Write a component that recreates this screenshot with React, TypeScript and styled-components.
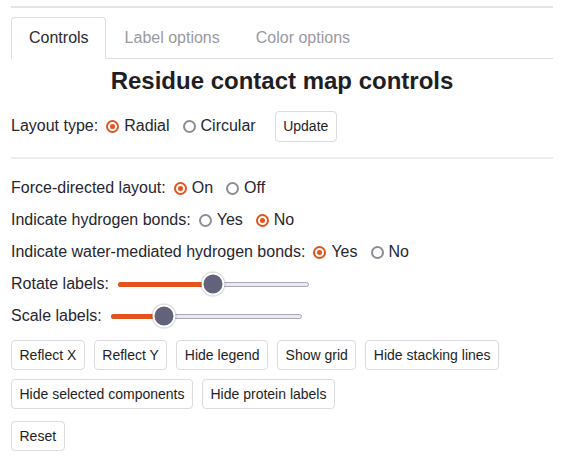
import React, { useState } from "react";
import styled, { createGlobalStyle } from "styled-components";

const Global = createGlobalStyle`
  html, body { margin: 0; padding: 0; background: #fff; }
  body { font-family: "Liberation Sans", Arial, sans-serif; color: #222; }
`;

const ORANGE = "#e2531e";

const Page = styled.div`
  padding: 6px 9px 0 11px;
  width: 542px;
`;

const TopRule = styled.div`
  border-top: 2px solid #e3e3e8;
`;

const Tabs = styled.div`
  display: flex;
  margin-top: 9px;
  border-bottom: 1px solid #dedee2;
  height: 41px;
`;

const Tab = styled.div<{ $active?: boolean }>`
  padding: 0 16px 0 17px;
  margin-right: 1px;
  height: ${(p) => (p.$active ? "42px" : "41px")};
  line-height: 40px;
  font-size: 16px;
  color: ${(p) => (p.$active ? "#2a2a33" : "#9a9aa2")};
  border: 1px solid ${(p) => (p.$active ? "#dedee2" : "transparent")};
  border-bottom: ${(p) => (p.$active ? "1px solid #fff" : "none")};
  border-radius: 4px 4px 0 0;
  background: #fff;
  box-sizing: border-box;
`;

const Heading = styled.h2`
  margin: 8px 0 0;
  text-align: center;
  font-size: 24px;
  font-weight: 700;
  color: #1e1e24;
  line-height: 28px;
`;

const Row = styled.div<{ $h?: number }>`
  display: flex;
  align-items: center;
  height: ${(p) => p.$h ?? 32}px;
  font-size: 16px;
  color: #262630;
`;

const Label = styled.span`
  margin-right: 8px;
`;

const Opt = styled.label`
  display: inline-flex;
  align-items: center;
  margin-right: 13px;
`;

const Radio = styled.span<{ $on?: boolean }>`
  width: 13px;
  height: 13px;
  box-sizing: border-box;
  border-radius: 50%;
  border: 2px solid ${(p) => (p.$on ? ORANGE : "#8c8c98")};
  margin-right: 5px;
  display: inline-flex;
  align-items: center;
  justify-content: center;
  &::after {
    content: "";
    width: 5px;
    height: 5px;
    border-radius: 50%;
    background: ${(p) => (p.$on ? ORANGE : "transparent")};
  }
`;

const Btn = styled.button`
  font-family: "Liberation Sans", Arial, sans-serif;
  font-size: 14px;
  color: #1e1e24;
  background: #fff;
  border: 1px solid #dcdce0;
  border-radius: 4px;
  height: 30px;
  padding: 0 7.5px;
  cursor: pointer;
`;

const UpdateBtn = styled(Btn)`
  margin-left: 6px;
  height: 31px;
`;

const Divider = styled.div`
  border-top: 2px solid #ececf0;
  margin: 11px 0 13px;
`;

const Track = styled.div<{ $w: number }>`
  position: relative;
  width: ${(p) => p.$w}px;
  height: 5px;
  border-radius: 3px;
  background: #e9e9ef;
  border: 1px solid #a8a8b4;
  box-sizing: border-box;
  margin-left: 1px;
`;

const Fill = styled.div`
  position: absolute;
  left: -1px;
  top: -1px;
  height: 5px;
  border-radius: 3px;
  background: ${ORANGE};
`;

const Thumb = styled.div`
  position: absolute;
  top: 50%;
  width: 19px;
  height: 19px;
  border-radius: 50%;
  background: #62627a;
  border: 2px solid #fff;
  box-shadow: 0 0 2px rgba(0, 0, 0, 0.45);
  transform: translate(-50%, -50%);
`;

const BtnRow = styled.div<{ $mt?: number }>`
  display: flex;
  flex-wrap: wrap;
  gap: 9px;
  margin-top: ${(p) => p.$mt ?? 9}px;
`;

const LayoutRow = styled(Row)`
  margin-top: 11px;
`;

const Slider = ({ w, pos }: { w: number; pos: number }) => (
  <Track $w={w}>
    <Fill style={{ width: pos }} />
    <Thumb style={{ left: pos }} />
  </Track>
);

export default function App() {
  const [tab] = useState(0);
  return (
    <Page>
      <Global />
      <TopRule />
      <Tabs>
        <Tab $active={tab === 0}>Controls</Tab>
        <Tab>Label options</Tab>
        <Tab>Color options</Tab>
      </Tabs>
      <Heading>Residue contact map controls</Heading>
      <LayoutRow $h={40}>
        <Label>Layout type:</Label>
        <Opt>
          <Radio $on />
          Radial
        </Opt>
        <Opt>
          <Radio />
          Circular
        </Opt>
        <UpdateBtn>Update</UpdateBtn>
      </LayoutRow>
      <Divider />
      <Row>
        <Label>Force-directed layout:</Label>
        <Opt>
          <Radio $on />
          On
        </Opt>
        <Opt>
          <Radio />
          Off
        </Opt>
      </Row>
      <Row>
        <Label>Indicate hydrogen bonds:</Label>
        <Opt>
          <Radio />
          Yes
        </Opt>
        <Opt>
          <Radio $on />
          No
        </Opt>
      </Row>
      <Row>
        <Label>Indicate water-mediated hydrogen bonds:</Label>
        <Opt>
          <Radio $on />
          Yes
        </Opt>
        <Opt>
          <Radio />
          No
        </Opt>
      </Row>
      <Row>
        <Label>Rotate labels:</Label>
        <Slider w={191} pos={94} />
      </Row>
      <Row>
        <Label>Scale labels:</Label>
        <Slider w={191} pos={52} />
      </Row>
      <BtnRow $mt={8}>
        <Btn>Reflect X</Btn>
        <Btn>Reflect Y</Btn>
        <Btn>Hide legend</Btn>
        <Btn>Show grid</Btn>
        <Btn>Hide stacking lines</Btn>
      </BtnRow>
      <BtnRow>
        <Btn>Hide selected components</Btn>
        <Btn>Hide protein labels</Btn>
      </BtnRow>
      <BtnRow $mt={12}>
        <Btn>Reset</Btn>
      </BtnRow>
    </Page>
  );
}
